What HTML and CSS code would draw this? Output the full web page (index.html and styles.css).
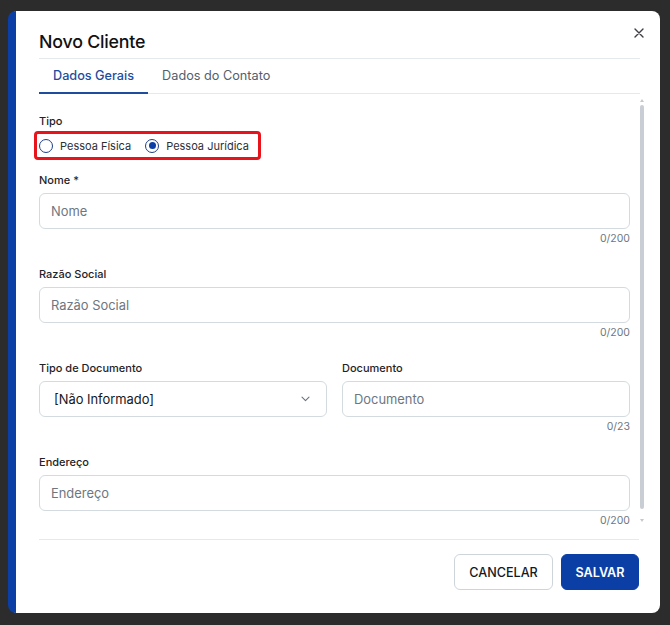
FILE: index.html
```html
<!DOCTYPE html>
<html lang="pt-BR">
<head>
<meta charset="utf-8">
<title>Novo Cliente</title>
<link rel="stylesheet" href="styles.css">
</head>
<body>
<div class="overlay">
  <div class="dialog">
    <div class="header">
      <h1 class="title">Novo Cliente</h1>
      <button class="close" aria-label="Fechar">
        <svg width="10" height="10" viewBox="0 0 10 10"><path d="M1 1L9 9M9 1L1 9" stroke="#3f3f46" stroke-width="1.4" stroke-linecap="round"/></svg>
      </button>
      <div class="tabs">
        <div class="tab active">Dados Gerais</div>
        <div class="tab">Dados do Contato</div>
      </div>
    </div>
    <div class="body">
      <div class="content">
        <div class="field-label tipo">Tipo</div>
        <div class="radio-group">
          <label class="radio"><span class="circle"></span>Pessoa Física</label>
          <label class="radio"><span class="circle checked"></span>Pessoa Jurídica</label>
        </div>

        <div class="group">
          <div class="field-label">Nome *</div>
          <div class="input"><span class="ph">Nome</span></div>
          <div class="counter">0/200</div>
        </div>

        <div class="group">
          <div class="field-label">Razão Social</div>
          <div class="input"><span class="ph">Razão Social</span></div>
          <div class="counter">0/200</div>
        </div>

        <div class="row">
          <div class="group">
            <div class="field-label">Tipo de Documento</div>
            <div class="input select"><span class="val">[Não Informado]</span>
              <svg width="9" height="6" viewBox="0 0 9 6"><path d="M1 1.2l3.5 3.5 3.5-3.5" fill="none" stroke="#6b7280" stroke-width="1.1" stroke-linecap="round" stroke-linejoin="round"/></svg>
            </div>
          </div>
          <div class="group">
            <div class="field-label">Documento</div>
            <div class="input"><span class="ph">Documento</span></div>
            <div class="counter">0/23</div>
          </div>
        </div>

        <div class="group">
          <div class="field-label">Endereço</div>
          <div class="input"><span class="ph">Endereço</span></div>
          <div class="counter">0/200</div>
        </div>
      </div>
      <div class="scrollbar">
        <span class="arrow up"></span>
        <span class="thumb"></span>
        <span class="arrow down"></span>
      </div>
    </div>
    <div class="footer">
      <button class="btn cancel">CANCELAR</button>
      <button class="btn save">SALVAR</button>
    </div>
  </div>
</div>
</body>
</html>
```

FILE: styles.css
```css
* { box-sizing: border-box; }
html, body {
  margin: 0;
  padding: 0;
  width: 670px;
  height: 625px;
  overflow: hidden;
  background: #2c2c2c;
  font-family: Inter, "Noto Sans", sans-serif;
  color: #1f2937;
}
.overlay {
  padding: 11px 10px 0 8px;
}
.dialog {
  width: 652px;
  height: 602px;
  background: #fff;
  border-left: 8px solid #0b3fa6;
  border-radius: 8px;
  display: flex;
  flex-direction: column;
}
.header {
  position: relative;
  padding: 19px 20px 0 23px;
}
.title {
  margin: 0 0 4px 0;
  font-size: 17.8px;
  line-height: 24px;
  font-weight: 500;
  color: #111;
  letter-spacing: -0.2px;
}
.close {
  position: absolute;
  top: 14px;
  right: 13px;
  width: 16px;
  height: 16px;
  padding: 0;
  border: 0;
  background: none;
  display: flex;
  align-items: center;
  justify-content: center;
}
.tabs {
  display: flex;
  border-top: 1px solid #e6e9ec;
  border-bottom: 1px solid #e6e9ec;
}
.tab {
  height: 35px;
  padding: 0 14px;
  margin-bottom: -1px;
  display: flex;
  align-items: center;
  font-size: 12.7px;
  color: #52606d;
  border-bottom: 2px solid transparent;
}
.tab.active {
  color: #1e4d9e;
  border-bottom-color: #1e4d9e;
  font-weight: 500;
}
.body {
  flex: 1;
  min-height: 0;
  display: flex;
  margin: 0 14px 0 18px;
}
.content {
  flex: 1;
  min-width: 0;
  overflow: hidden;
  padding: 19px 8px 0 5px;
}
.scrollbar {
  width: 8px;
  display: flex;
  flex-direction: column;
  align-items: center;
  padding: 5px 0 4px;
  gap: 2px;
}
.thumb {
  flex: 1;
  width: 4px;
  margin: 1px 0 8px;
  border-radius: 2px;
  background: #c9ced4;
}
.arrow {
  width: 0;
  height: 0;
  border-left: 2px solid transparent;
  border-right: 2px solid transparent;
}
.arrow.up { border-bottom: 3px solid #c4c9ce; }
.arrow.down { border-top: 3px solid #c4c9ce; }
.field-label {
  font-size: 11px;
  line-height: 16px;
  font-weight: 500;
  color: #1f2328;
  margin-bottom: 5px;
}
.field-label.tipo { margin-bottom: 2px; }
.radio-group {
  display: inline-flex;
  align-items: center;
  gap: 14px;
  height: 29px;
  margin-left: -5px;
  padding: 0 9px 0 2px;
  border: 3px solid #e8141c;
  border-radius: 4px;
  margin-bottom: 12px;
}
.radio {
  display: flex;
  align-items: center;
  gap: 7px;
  font-size: 11px;
  color: #2b2f36;
}
.circle {
  width: 14px;
  height: 14px;
  border-radius: 50%;
  border: 1.5px solid #1e3f86;
  display: flex;
  align-items: center;
  justify-content: center;
}
.circle.checked::after {
  content: "";
  width: 7px;
  height: 7px;
  border-radius: 50%;
  background: #0b3fa6;
}
.group {
  margin-bottom: 20px;
}
.input {
  height: 36px;
  border: 1px solid #d3dbe0;
  border-radius: 6px;
  padding: 0 11px;
  display: flex;
  align-items: center;
  font-size: 12.9px;
}
.ph { color: #6e7781; }
.select {
  justify-content: space-between;
  padding: 0 16px 0 14px;
}
.val { color: #15191e; }
.counter {
  margin-top: 3px;
  text-align: right;
  font-size: 10.5px;
  line-height: 14px;
  color: #6e7781;
}
.row {
  display: grid;
  grid-template-columns: 1fr 1fr;
  gap: 15px;
}
.footer {
  margin: 13px 21px 0 23px;
  border-top: 1px solid #e6e9ec;
  padding: 14px 0 23px;
  display: flex;
  justify-content: flex-end;
  gap: 8px;
}
.btn {
  height: 36px;
  border-radius: 6px;
  font-family: Inter, "Noto Sans", sans-serif;
  font-size: 12.6px;
  font-weight: 500;
  padding: 0 10px;
}
.cancel {
  width: 99px;
  background: #fff;
  border: 1px solid #cdd5db;
  color: #15191e;
}
.save {
  width: 78px;
  background: #0b3fa6;
  border: 1px solid #0b3fa6;
  color: #fff;
  font-weight: 600;
}
```
